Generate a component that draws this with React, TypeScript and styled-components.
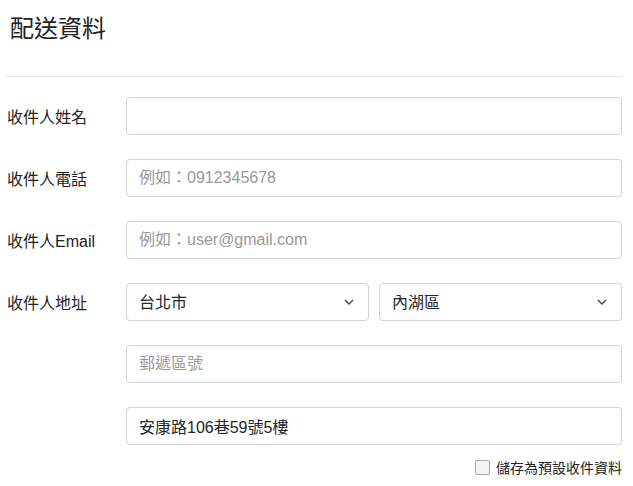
import React from "react";
import styled, { createGlobalStyle } from "styled-components";

const GlobalStyle = createGlobalStyle`
    html, body {
        margin: 0;
        padding: 0;
        background: #fff;
    }
    body {
        font-family: "Liberation Sans", "Noto Sans CJK TC", sans-serif;
        color: #212529;
    }
    * {
        box-sizing: border-box;
    }
`;

/* ------------------ Styled ------------------ */

const Page = styled.div`
    width: 633px;
    padding: 0 11px 0 6px;
`;

const Title = styled.h2`
    margin: 0;
    padding: 15px 4px 0;
    height: 77px;
    font-size: 24px;
    line-height: 28.8px;
    font-weight: normal;
    color: #222;
    border-bottom: 1px solid #e3e3e3;
`;

const Form = styled.form`
    display: grid;
    grid-template-columns: 120px 1fr;
    row-gap: 24px;
    padding-top: 20px;
`;

const Label = styled.label`
    display: flex;
    align-items: center;
    height: 38px;
    padding-left: 1px;
    font-size: 16px;
    color: #222;
`;

const Field = styled.div`
    display: flex;
    gap: 10px;
`;

const Input = styled.input`
    width: 100%;
    height: 38px;
    padding: 0 12px;
    font-family: inherit;
    font-size: 16px;
    color: #212529;
    background: #fff;
    border: 1px solid #ced4da;
    border-radius: 4px;
    outline: none;

    &::placeholder {
        color: #999;
    }
`;

const SelectWrap = styled.div`
    position: relative;
    flex: 1;
`;

const Select = styled.select`
    width: 100%;
    height: 38px;
    padding: 0 32px 0 12px;
    font-family: inherit;
    font-size: 16px;
    color: #212529;
    background: #fff;
    border: 1px solid #ced4da;
    border-radius: 4px;
    appearance: none;
    outline: none;
`;

const Chevron = styled.svg`
    position: absolute;
    right: 15px;
    top: 16px;
    width: 10px;
    height: 6px;
    pointer-events: none;
`;

const CheckRow = styled.div`
    grid-column: 1 / 3;
    display: flex;
    justify-content: flex-end;
    align-items: center;
    gap: 6px;
    margin-top: -12px;
    font-size: 14px;
    color: #222;
`;

const Checkbox = styled.input`
    appearance: none;
    margin: 0;
    width: 15px;
    height: 15px;
    border: 1px solid #a8a8a8;
    border-radius: 2px;
    background: #f4f4f4;
`;

/* ------------------ Component ------------------ */

const ChevronIcon = () => (
    <Chevron viewBox="0 0 10 6">
        <path d="M1 1 L5 5 L9 1" fill="none" stroke="#444" strokeWidth="1.4" />
    </Chevron>
);

const cities = ["台北市", "新北市", "桃園市"];
const districts = ["內湖區", "松山區", "信義區"];

export default function App() {
    return (
        <Page>
            <GlobalStyle />
            <Title>配送資料</Title>
            <Form>
                <Label>收件人姓名</Label>
                <Input type="text" />

                <Label>收件人電話</Label>
                <Input type="tel" placeholder="例如：0912345678" />

                <Label>收件人Email</Label>
                <Input type="email" placeholder="例如：user@gmail.com" />

                <Label>收件人地址</Label>
                <Field>
                    <SelectWrap>
                        <Select defaultValue="台北市">
                            {cities.map((c) => (
                                <option key={c}>{c}</option>
                            ))}
                        </Select>
                        <ChevronIcon />
                    </SelectWrap>
                    <SelectWrap>
                        <Select defaultValue="內湖區">
                            {districts.map((d) => (
                                <option key={d}>{d}</option>
                            ))}
                        </Select>
                        <ChevronIcon />
                    </SelectWrap>
                </Field>

                <span />
                <Input type="text" placeholder="郵遞區號" />

                <span />
                <Input type="text" defaultValue="安康路106巷59號5樓" />

                <CheckRow>
                    <Checkbox type="checkbox" id="save-default" />
                    <label htmlFor="save-default">儲存為預設收件資料</label>
                </CheckRow>
            </Form>
        </Page>
    );
}
